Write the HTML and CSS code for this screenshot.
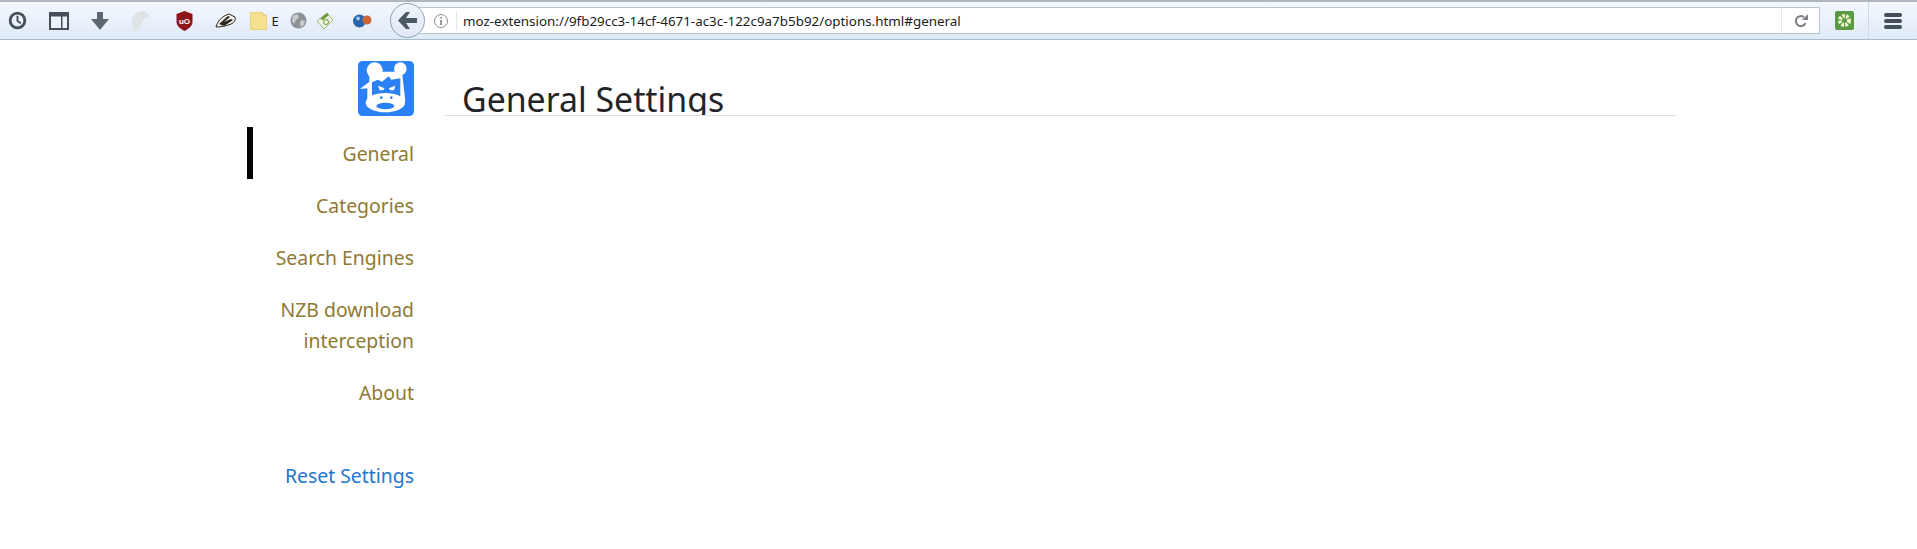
FILE: index.html
```html
<!DOCTYPE html>
<html lang="en">
<head>
    <meta charset="UTF-8">
    <title>Options</title>
    <link rel="stylesheet" href="styles.css">
</head>
<body>

<!-- Browser toolbar -->
<header class="toolbar">
    <div class="addons">
        <svg class="icon" width="19" height="19" viewBox="0 0 20 20"><circle cx="10" cy="10" r="7.700" fill="none" stroke="#46505a" stroke-width="3"/><path d="M10 5v5.500l3.500 2.500" fill="none" stroke="#46505a" stroke-width="2"/></svg>
        <svg class="icon" width="20" height="18" viewBox="0 0 20 18"><rect x="1" y="1" width="18" height="16" fill="#eef3f9" stroke="#46505a" stroke-width="2"/><rect x="1" y="1" width="18" height="3.500" fill="#46505a"/><rect x="12" y="4" width="1.500" height="13" fill="#46505a"/></svg>
        <svg class="icon" width="18" height="18" viewBox="0 0 18 18"><path d="M6 0h6v7h6l-9 11L0 7h6z" fill="#5b6873"/></svg>
        <svg class="icon" width="19" height="20" viewBox="0 0 19 20"><path d="M3 20C-1 12 0 2 10 0c5 0 8 3 9 7-3-1-6 0-7 3-2 4-3 8-9 10z" fill="#dfe4e6"/></svg>
        <svg class="icon" width="17" height="20" viewBox="0 0 17 20"><path d="M8.500 0l8 3v8c0 4-4 7-8 9-4-2-8-5-8-9V3z" fill="#8e1418"/><text class="ublock-text" x="8.500" y="12.500" text-anchor="middle">uO</text></svg>
        <svg class="icon" width="21" height="15" viewBox="0 0 21 15"><path d="M1 14C2 9 7 3 14 1l6 3c1 3-1 6-4 7-5 2-10 3-15 3z" fill="#f2efe6" stroke="#2b2622"/><path d="M4 11l9-8 2 1-6 5 7-3 2 1-9 6z" fill="#2b2622"/></svg>
        <svg class="icon" width="17" height="18" viewBox="0 0 17 18"><path d="M0 1q0-1 1-1h11l1 3h3q1 0 1 1v13q0 1-1 1H1q-1 0-1-1z" fill="#f6e08f" stroke="#dcc56e"/></svg>
        <span class="addon-letter">E</span>
        <svg class="icon" width="17" height="17" viewBox="0 0 17 17"><circle cx="8.500" cy="8.500" r="8" fill="#8d9297"/><path d="M3 4l4-2 2 3-3 3-2 4-2-3zM11 8l4 1-1 4-3 2-1-4z" fill="#c9cdd0"/></svg>
        <svg class="icon" width="18" height="18" viewBox="0 0 18 18"><path d="M1 9l10-8 6 7-9 9z" fill="#edf3e2" stroke="#9fbc80"/><path d="M4 7l7-6 2 2-6 5z" fill="#6a9a3c"/><circle cx="10" cy="10" r="2.500" fill="none" stroke="#6a9a3c"/></svg>
        <svg class="icon" width="19" height="14" viewBox="0 0 19 14"><circle cx="6.500" cy="7" r="6.500" fill="#2b63ad"/><circle cx="14" cy="6" r="4.500" fill="#c8683a"/><circle cx="5" cy="4.500" r="2" fill="#9cc4ea"/></svg>
    </div>

    <div class="back-button">
        <svg width="19" height="17" viewBox="0 0 19 17"><path d="M8 0h4L8 6h11v5H8l4 6H8L0 8.500z" fill="#4c5863"/></svg>
    </div>

    <div class="urlbar">
        <svg class="info" width="16" height="16" viewBox="0 0 16 16"><circle cx="8" cy="8" r="6.500" fill="none" stroke="#8a8f94"/><rect x="7.300" y="7" width="1.500" height="5" fill="#70767c"/><rect x="7.300" y="4" width="1.500" height="1.500" fill="#70767c"/></svg>
        <span class="url">moz-extension://9fb29cc3-14cf-4671-ac3c-122c9a7b5b92/options.html#general</span>
        <div class="reload">
            <svg width="14" height="14" viewBox="0 0 14 14"><path d="M11.500 9A5 5 0 1 1 10 3.200" fill="none" stroke="#7d8186" stroke-width="2"/><path d="M8 6h6V0z" fill="#7d8186"/></svg>
        </div>
    </div>

    <div class="green-addon">
        <svg width="19" height="19" viewBox="0 0 19 19"><rect width="19" height="19" rx="2" fill="#5b9a43"/><circle cx="9.500" cy="9.500" r="4.500" fill="none" stroke="#eef5c9" stroke-width="4" stroke-dasharray="2.500 1.200"/></svg>
    </div>

    <div class="menu-button">
        <span></span><span></span><span></span>
    </div>
</header>

<div class="page">
    <aside class="sidebar">
        <svg class="logo" width="56" height="55" viewBox="0 0 168 165">
            <rect width="168" height="165" rx="14" fill="#2a80f5"/>
            <circle cx="50" cy="28" r="24" fill="#fff"/>
            <circle cx="127" cy="23" r="19" fill="#fff"/>
            <path d="M6 84L34 62 34 32H132L142 120H28V82z" fill="#fff"/>
            <path d="M42 64L60 56 72 62 92 46 100 56 127 52V106H42z" fill="#2a80f5"/>
            <path d="M60 74l20 8-5 6H65zM112 74l-20 8 5 6h11z" fill="#fff"/>
            <ellipse cx="82" cy="125" rx="59" ry="29" fill="#fff"/>
            <circle cx="70" cy="110" r="4" fill="#2a80f5"/>
            <circle cx="100" cy="110" r="4" fill="#2a80f5"/>
            <ellipse cx="82" cy="135" rx="27" ry="10" fill="#2a80f5"/>
        </svg>
        <nav class="nav">
            <a class="nav-item active">General</a>
            <a class="nav-item">Categories</a>
            <a class="nav-item">Search Engines</a>
            <a class="nav-item">NZB download interception</a>
            <a class="nav-item">About</a>
            <a class="nav-item reset">Reset Settings</a>
        </nav>
    </aside>

    <main class="content">
        <h1>General Settings</h1>
    </main>
</div>

</body>
</html>
```

FILE: styles.css
```css
html, body {
    margin: 0;
    height: 549px;
    overflow: hidden;
    background-color: #fff;
}
body {
    font-family: 'Noto Sans', 'Open Sans', sans-serif;
}

/* Toolbar */
.toolbar {
    display: flex;
    align-items: center;
    height: 37px;
    border-top: 2px solid #b0b7bd;
    border-bottom: 1px solid #a9bacb;
    background: linear-gradient(#f3f8fd, #dfeaf7);
}
.addons {
    display: grid;
    grid-template-columns: 34px 50px 32px 48px 40px 42px 24px 10px 36px 18px 56px;
    justify-items: center;
    align-items: center;
    width: 390px;
    flex-shrink: 0;
}
.icon {
    display: block;
}
.addon-letter {
    font-size: 13px;
    color: #222;
}
.ublock-text {
    font-family: 'Liberation Sans', sans-serif;
    font-size: 8px;
    font-weight: bold;
    fill: #fff;
}
.back-button {
    display: flex;
    align-items: center;
    justify-content: center;
    position: relative;
    z-index: 1;
    box-sizing: border-box;
    width: 35px;
    height: 35px;
    margin-right: -6px;
    border: 1px solid #8ea2b6;
    border-radius: 50%;
    background: linear-gradient(#f0f5fb, #dfe9f5);
    flex-shrink: 0;
}
.urlbar {
    display: flex;
    align-items: center;
    box-sizing: border-box;
    width: 1401px;
    height: 27px;
    padding-left: 13px;
    border: 1px solid #b7c4d2;
    background-color: #fff;
}
.info {
    flex-shrink: 0;
}
.url {
    flex: 1;
    margin-left: 7px;
    padding-left: 6px;
    border-left: 1px solid #e3e6e9;
    font-size: 13.4px;
    line-height: 20px;
    color: #1c1c1c;
}
.reload {
    display: flex;
    align-items: center;
    justify-content: center;
    width: 37px;
    height: 25px;
    border-left: 1px solid #e3e6e9;
}
.green-addon {
    display: flex;
    margin-left: 15px;
}
.menu-button {
    display: flex;
    flex-direction: column;
    justify-content: center;
    gap: 2px;
    align-self: stretch;
    box-sizing: border-box;
    width: 49px;
    margin-left: 14px;
    padding: 0 15px;
    border-left: 1px solid #cfdae6;
}
.menu-button span {
    height: 4px;
    border-radius: 2px;
    background-color: #46505a;
}

/* Page */
.page {
    display: flex;
    padding-left: 247px;
}
.sidebar {
    box-sizing: border-box;
    width: 198px;
    padding: 21px 31px 0 0;
    text-align: right;
    flex-shrink: 0;
}
.logo {
    display: block;
    margin-left: auto;
}
.nav {
    margin-top: 11px;
}
.nav-item {
    display: block;
    padding: 11px 0 10px 20px;
    border-left: 6px solid transparent;
    font-size: 19.4px;
    line-height: 31px;
    color: #8f7a35;
}
.nav-item.active {
    border-left-color: #000;
}
.nav-item.reset {
    margin-top: 31px;
    color: #2176d2;
}
.content {
    box-sizing: border-box;
    width: 1232px;
    height: 76px;
    padding: 0 0 0 17px;
    border-bottom: 1px solid #dee2e6;
    overflow: hidden;
}
h1 {
    margin: 35px 0 0;
    font-size: 33.85px;
    font-weight: 400;
    line-height: 48px;
    color: #212529;
}
```
